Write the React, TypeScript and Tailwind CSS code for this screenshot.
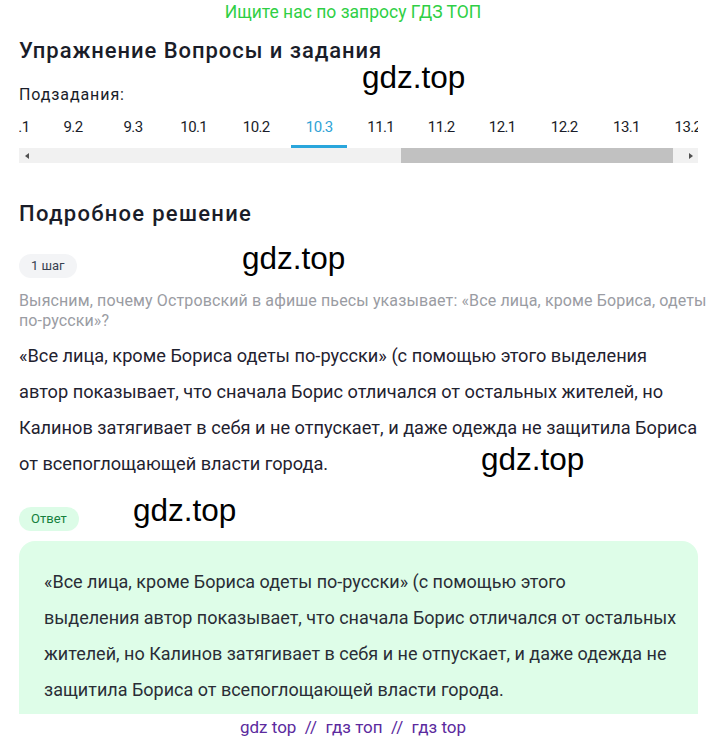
import React from "react";

const tabs: [string, number][] = [
  ["9.1", 46],
  ["9.2", 60],
  ["9.3", 60],
  ["10.1", 61.5],
  ["10.2", 63.5],
  ["10.3", 62.5],
  ["11.1", 60.5],
  ["11.2", 60.5],
  ["12.1", 61.5],
  ["12.2", 62.5],
  ["13.1", 62],
  ["13.2", 61],
];

const solutionLines = [
  "«Все лица, кроме Бориса одеты по-русски» (с помощью этого выделения",
  "автор показывает, что сначала Борис отличался от остальных жителей, но",
  "Калинов затягивает в себя и не отпускает, и даже одежда не защитила Бориса",
  "от всепоглощающей власти города.",
];

const answerLines = [
  "«Все лица, кроме Бориса одеты по-русски» (с помощью этого",
  "выделения автор показывает, что сначала Борис отличался от остальных",
  "жителей, но Калинов затягивает в себя и не отпускает, и даже одежда не",
  "защитила Бориса от всепоглощающей власти города.",
];

function Mark({ className }: { className: string }) {
  return (
    <div
      className={"absolute text-[31.5px] leading-none text-black " + className}
      style={{ fontFamily: "'Liberation Sans', Arial, sans-serif" }}
    >
      gdz.top
    </div>
  );
}

export default function App() {
  return (
    <div
      className="relative w-[706px] h-[741px] overflow-hidden bg-white text-[#1f2230]"
      style={{ fontFamily: "Roboto, 'Noto Sans', sans-serif" }}
    >
      <div className="pt-[2px] text-center text-[17.5px] leading-[20px] text-[#2fcf45]">
        Ищите нас по запросу ГДЗ ТОП
      </div>

      <div className="pl-[19px] pr-[8px]">
        <h1 className="mt-[16px] text-[22px] font-medium leading-[26px] tracking-[0.95px] text-[#1a1d29]">
          Упражнение Вопросы и задания
        </h1>
        <div className="mt-[21px] text-[16px] leading-[20px] tracking-[0.9px] text-[#1a1d29]">Подзадания:</div>

        <div className="mt-[9px] overflow-hidden">
          <div className="flex ml-[-22px]">
            {tabs.map(([t, w]) => (
              <div key={t} className="shrink-0 h-[34px] flex justify-center" style={{ width: w }}>
                <div
                  className={
                    "w-[56px] shrink-0 h-[34px] pt-[4px] text-center text-[15px] leading-[18px] tracking-[-0.6px] border-b-[3px] " +
                    (t === "10.3" ? "text-[#2fa3d6] border-[#2aa6dc]" : "text-[#1a1d29] border-transparent")
                  }
                >
                  {t}
                </div>
              </div>
            ))}
          </div>
        </div>
        <div className="flex h-[15px] items-center bg-[#f1f1f1]">
          <div className="w-[15px] flex justify-center">
            <div className="w-0 h-0 border-y-[3.5px] border-y-transparent border-r-[4px] border-r-[#505050]" />
          </div>
          <div className="flex-1 h-full flex">
            <div className="w-[367px]" />
            <div className="w-[272px] bg-[#c1c1c1]" />
          </div>
          <div className="w-[15px] flex justify-center">
            <div className="w-0 h-0 border-y-[3.5px] border-y-transparent border-l-[4px] border-l-[#505050]" />
          </div>
        </div>

        <h2 className="mt-[38px] text-[22px] font-medium leading-[26px] tracking-[1.3px] text-[#1a1d29]">
          Подробное решение
        </h2>

        <div className="mt-[27px] inline-flex h-[24px] items-center rounded-full bg-[#f3f4f6] px-[12px] text-[13px] text-[#374151]">
          1 шаг
        </div>

        <p className="mt-[13px] whitespace-nowrap text-[16px] leading-[20px] tracking-[0.12px] text-[#9a9ca3]">
          Выясним, почему Островский в афише пьесы указывает: «Все лица, кроме Бориса, одеты
          <br />
          по-русски»?
        </p>

        <p className="mt-[7px] whitespace-nowrap text-[18.2px] leading-[36px] text-[#1f2230]">
          {solutionLines.map((l, i) => (
            <React.Fragment key={i}>
              {l}
              {i < solutionLines.length - 1 && <br />}
            </React.Fragment>
          ))}
        </p>

        <div className="mt-[25px] inline-flex h-[24px] items-center rounded-full bg-[#dcfce7] px-[12px] text-[13px] text-[#15803d]">
          Ответ
        </div>

        <div className="mt-[10px] h-[173px] rounded-t-[16px] bg-[#defde8] pl-[25px] pr-[8px] pt-[23px]">
          <p className="whitespace-nowrap text-[18px] leading-[36px] text-[#2a2d36]">
            {answerLines.map((l, i) => (
              <React.Fragment key={i}>
                {l}
                {i < answerLines.length - 1 && <br />}
              </React.Fragment>
            ))}
          </p>
        </div>
      </div>

      <div className="mt-[3px] text-center text-[17px] leading-[20px] text-[#5b2a9e]">
        gdz top&nbsp; //&nbsp; гдз топ&nbsp; //&nbsp; гдз top
      </div>

      <Mark className="left-[362px] top-[62px]" />
      <Mark className="left-[242px] top-[243px]" />
      <Mark className="left-[481px] top-[444px]" />
      <Mark className="left-[133px] top-[495px]" />
    </div>
  );
}
